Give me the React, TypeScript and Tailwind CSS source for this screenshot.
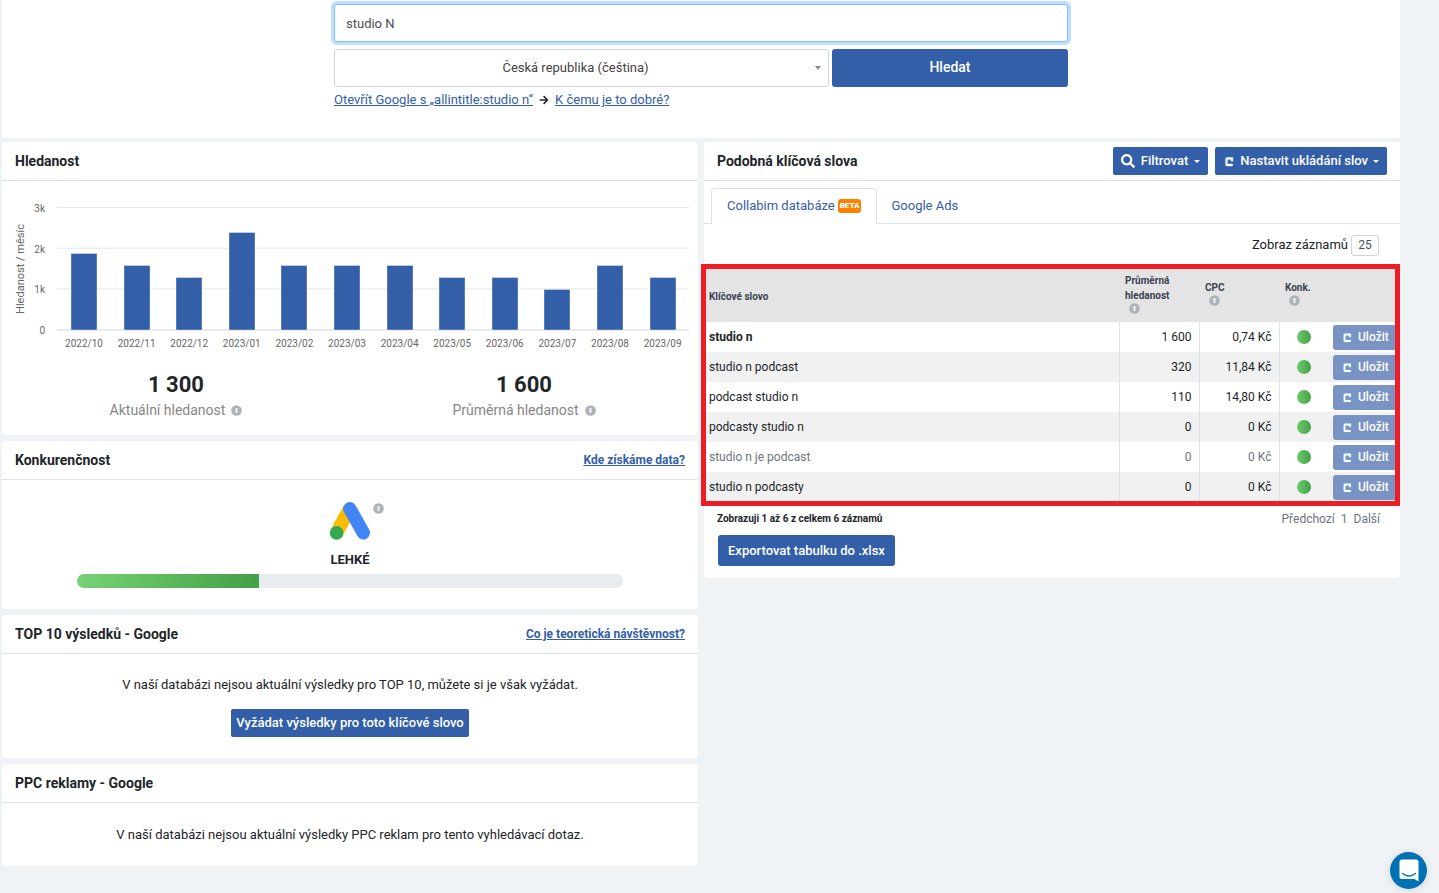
import { useState } from 'react'
import type { ReactNode } from 'react'
import { FaArrowRight, FaSearch } from 'react-icons/fa'

const volumes = [
  { month: '2022/10', value: 1900 },
  { month: '2022/11', value: 1600 },
  { month: '2022/12', value: 1300 },
  { month: '2023/01', value: 2400 },
  { month: '2023/02', value: 1600 },
  { month: '2023/03', value: 1600 },
  { month: '2023/04', value: 1600 },
  { month: '2023/05', value: 1300 },
  { month: '2023/06', value: 1300 },
  { month: '2023/07', value: 1000 },
  { month: '2023/08', value: 1600 },
  { month: '2023/09', value: 1300 },
]

const keywords = [
  { name: 'studio n', volume: '1 600', cpc: '0,74 Kč', style: 'font-bold' },
  { name: 'studio n podcast', volume: '320', cpc: '11,84 Kč', style: '' },
  { name: 'podcast studio n', volume: '110', cpc: '14,80 Kč', style: '' },
  { name: 'podcasty studio n', volume: '0', cpc: '0 Kč', style: '' },
  { name: 'studio n je podcast', volume: '0', cpc: '0 Kč', muted: true, style: '' },
  { name: 'studio n podcasty', volume: '0', cpc: '0 Kč', style: '' },
]

function InfoIcon() {
  return (
    <svg className="inline-block size-[11px] shrink-0" viewBox="0 0 11 11" aria-hidden="true">
      <circle cx="5.5" cy="5.5" r="5.3" fill="#adb3b8" />
      <rect x="4.5" y="3" width="2" height="5" rx="0.4" fill="#f1f3f4" />
    </svg>
  )
}

function CollabimIcon() {
  return (
    <svg className="inline-block h-[14px] w-[12px] shrink-0" viewBox="0 0 12 14" fill="none" aria-hidden="true">
      <path
        d="M9 8V4.5H3.5V11H9"
        stroke="#6cb4d8"
        strokeOpacity="0.6"
        strokeWidth="3.6"
        strokeLinejoin="round"
      />
      <path d="M9 7V4.5H4.2Q3.5 4.5 3.5 5.2V10.3Q3.5 11 4.2 11H9.8" stroke="#fff" strokeWidth="1.8" />
    </svg>
  )
}

function Caret() {
  return (
    <svg className="h-[3px] w-[6px]" viewBox="0 0 6 3" aria-hidden="true">
      <path d="M0 0H6L3 3Z" fill="currentColor" />
    </svg>
  )
}

function Card({ title, action, children }: { title: string; action?: ReactNode; children: ReactNode }) {
  return (
    <section className="rounded bg-white">
      <header className="flex h-[39px] items-center justify-between border-b border-[#dfe2e5] px-[13px]">
        <h2 className="text-sm font-bold">{title}</h2>
        {action}
      </header>
      {children}
    </section>
  )
}

function VolumeChart() {
  const base = 149
  const scale = 122 / 3000
  return (
    <svg className="block w-full" viewBox="0 0 696 179" role="img" aria-label="Hledanost / měsíc">
      {[3, 2, 1].map((k) => (
        <line key={k} x1="55" x2="687" y1={base - k * 1000 * scale - 0.5} y2={base - k * 1000 * scale - 0.5} stroke="#e6e6e6" />
      ))}
      <line x1="55" x2="687" y1="149" y2="149" stroke="#ccd6eb" />
      {['0', '1k', '2k', '3k'].map((label, i) => (
        <text key={label} x="43" y={153 - i * 40.7} textAnchor="end" fontSize="10" fill="#666">
          {label}
        </text>
      ))}
      <text transform="translate(22 88) rotate(-90)" textAnchor="middle" fontSize="11" fill="#666">
        Hledanost / měsíc
      </text>
      {volumes.map(({ month, value }, i) => {
        const center = 82 + i * 52.6
        const top = Math.round(base - value * scale) + 0.5
        return (
          <g key={month}>
            <rect
              x={Math.round(center - 13)}
              y={top}
              width="26"
              height={base - top}
              fill="#335ea8"
              stroke="#fff"
              strokeOpacity="0.6"
              strokeWidth="0.6"
            />
            <text x={center} y="166" textAnchor="middle" fontSize="10" fill="#666">
              {month}
            </text>
          </g>
        )
      })}
    </svg>
  )
}

function Stat({ value, label }: { value: string; label: string }) {
  return (
    <div className="flex-1 text-center">
      <p className="text-[22px] leading-7 font-bold">{value}</p>
      <p className="flex items-center justify-center gap-[6px] text-sm leading-[22px] text-[#868686]">
        {label}
        <InfoIcon />
      </p>
    </div>
  )
}

function AdsLogo() {
  return (
    <svg className="h-[38px] w-[42px]" viewBox="0 0 42 38" aria-hidden="true">
      <path d="M20.5 6.8L7.5 31" stroke="#fbbc04" strokeWidth="13.4" />
      <path d="M20.8 6.8L34.3 30.8" stroke="#4285f4" strokeWidth="13.4" strokeLinecap="round" />
      <circle cx="7.6" cy="30.9" r="6.8" fill="#34a853" />
    </svg>
  )
}

function KeywordTable() {
  return (
    <div className="relative">
      <table className="w-full table-fixed text-xs">
        <colgroup>
          <col />
          <col className="w-[80px]" />
          <col className="w-[80px]" />
          <col className="w-[50px]" />
          <col className="w-[71px]" />
        </colgroup>
        <thead>
          <tr className="h-[56px] bg-[#e4e4e4] text-left text-[10px] leading-[15px] text-[#3b3f51]">
            <th className="pt-1 pl-[5px]">Klíčové slovo</th>
            <th className="pb-1 pl-[6px]">
              Průměrná hledanost
              <span className="block h-[9px] pl-1 leading-[9px]"><InfoIcon /></span>
            </th>
            <th className="pb-1 pl-[6px]">
              CPC
              <span className="block h-[9px] pl-1 leading-[9px]"><InfoIcon /></span>
            </th>
            <th className="pb-1 pl-[6px]">
              Konk.
              <span className="block h-[9px] pl-1 leading-[9px]"><InfoIcon /></span>
            </th>
            <th aria-label="Uložit" />
          </tr>
        </thead>
        <tbody>
          {keywords.map((row) => (
            <tr key={row.name} className={`h-[30px] even:bg-[#f1f1f1] ${row.muted ? 'text-[#6c757d]' : ''}`}>
              <td className={`pl-[5px] ${row.style}`}>{row.name}</td>
              <td className="border-l border-[#dee2e6] pr-[7px] text-right">{row.volume}</td>
              <td className="border-l border-[#dee2e6] pr-[7px] text-right">{row.cpc}</td>
              <td className="border-l border-[#dee2e6]">
                <span className="mx-auto block size-[14px] rounded-full bg-linear-to-r from-[#6dcb6d] to-[#43a047]" />
              </td>
              <td className="pl-1">
                <button className="flex h-[25px] w-[64px] items-center gap-[5px] rounded-[3px] bg-[#7993c5] pl-2 font-medium text-white">
                  <CollabimIcon />
                  Uložit
                </button>
              </td>
            </tr>
          ))}
        </tbody>
      </table>
      <div className="pointer-events-none absolute -top-[2px] right-0 -bottom-1 -left-[3px] border-5 border-[#ee1c25]" />
    </div>
  )
}

export default function App() {
  const [query, setQuery] = useState('studio N')

  return (
    <div className="min-h-screen bg-[#eff3f6] pr-[39px] pl-[2px] font-[Roboto,sans-serif] text-[13px] text-[#212529]">
      <section className="bg-white pt-1 pb-8">
        <form className="mx-auto flex max-w-[734px] flex-col gap-[7px]" onSubmit={(e) => e.preventDefault()}>
          <input
            type="text"
            aria-label="Klíčové slovo"
            value={query}
            onChange={(e) => setQuery(e.target.value)}
            className="h-[38px] rounded-[3px] border border-[#80bdff] px-[11px] text-[#495057] ring-3 ring-[#bfdeff] outline-none"
          />
          <div className="flex gap-[3px]">
            <div className="relative flex-1">
              <select
                aria-label="Země a jazyk"
                className="h-[38px] w-full appearance-none rounded-[3px] border border-[#ced4da] bg-white pr-5 pl-2 text-[#444] [text-align-last:center]"
              >
                <option>Česká republika (čeština)</option>
              </select>
              <svg
                className="pointer-events-none absolute top-[17px] right-[8px] h-[4px] w-[6px]"
                viewBox="0 0 6 4"
                aria-hidden="true"
              >
                <path d="M0 0H6L3 4Z" fill="#888" />
              </svg>
            </div>
            <button type="submit" className="h-[38px] w-[236px] rounded-[3px] bg-[#335ea8] pb-[2px] text-sm font-medium text-white">
              Hledat
            </button>
          </div>
          <div className="flex h-3 items-center gap-[6px] text-[#335ea8]">
            <a href="#" className="underline">Otevřít Google s „allintitle:studio n“</a>
            <FaArrowRight className="size-[10px] text-[#212529]" />
            <a href="#" className="underline">K čemu je to dobré?</a>
          </div>
        </form>
      </section>

      <main className="mt-1 grid grid-cols-2 items-start gap-[6px]">
        <div className="flex flex-col gap-[6px]">
          <Card title="Hledanost">
            <VolumeChart />
            <div className="flex pt-[11px] pb-[14px]">
              <Stat value="1 300" label="Aktuální hledanost" />
              <Stat value="1 600" label="Průměrná hledanost" />
            </div>
          </Card>

          <Card
            title="Konkurenčnost"
            action={<a href="#" className="text-xs font-bold text-[#335ea8] underline">Kde získáme data?</a>}
          >
            <div className="flex flex-col items-center px-[75px] pt-[22px] pb-[21px]">
              <div className="relative">
                <AdsLogo />
                <span className="absolute top-px left-[44px] flex"><InfoIcon /></span>
              </div>
              <p className="mt-[10px] mb-1 leading-5 font-bold">LEHKÉ</p>
              <div className="h-[14px] w-full overflow-hidden rounded-full bg-[#e9ecef]">
                <div className="h-full w-1/3 bg-linear-to-r from-[#76d275] to-[#43a047]" />
              </div>
            </div>
          </Card>

          <Card
            title="TOP 10 výsledků - Google"
            action={<a href="#" className="text-xs font-bold text-[#335ea8] underline">Co je teoretická návštěvnost?</a>}
          >
            <div className="flex flex-col items-center gap-[14px] pt-[21px] pb-[21px]">
              <p className="leading-5">V naší databázi nejsou aktuální výsledky pro TOP 10, můžete si je však vyžádat.</p>
              <button className="h-[28px] rounded-[2px] bg-[#335ea8] px-[5px] font-medium text-white">
                Vyžádat výsledky pro toto klíčové slovo
              </button>
            </div>
          </Card>

          <Card title="PPC reklamy - Google">
            <p className="pt-[22px] pb-[21px] text-center leading-5">
              V naší databázi nejsou aktuální výsledky PPC reklam pro tento vyhledávací dotaz.
            </p>
          </Card>
        </div>

        <Card
          title="Podobná klíčová slova"
          action={
            <div className="flex gap-[7px] font-medium text-white">
              <button className="flex h-[28px] items-center gap-[6px] rounded-[2px] bg-[#335ea8] px-2">
                <FaSearch className="size-[14px]" />
                Filtrovat
                <Caret />
              </button>
              <button className="flex h-[28px] items-center gap-[5px] rounded-[2px] bg-[#335ea8] px-2">
                <CollabimIcon />
                Nastavit ukládání slov
                <Caret />
              </button>
            </div>
          }
        >
          <nav className="flex border-b border-[#dee2e6] pt-[7px] pl-[7px] text-[#335ea8]">
            <a href="#" className="-mb-px flex h-[36px] items-center gap-[3px] rounded-t border border-b-0 border-[#dee2e6] bg-white px-[15px] pb-[2px]">
              Collabim databáze
              <span className="flex h-[14px] items-center rounded-[3px] bg-[#ff7f00] px-[2px] text-[8px] font-black text-white">BETA</span>
            </a>
            <a href="#" className="flex h-[35px] items-center px-[14px]">Google Ads</a>
          </nav>
          <label className="flex h-[42px] items-center justify-end gap-[3px] pr-[21px]">
            Zobraz záznamů
            <select className="h-[21px] w-[28px] appearance-none rounded-[3px] border border-[#ced4da] text-center text-xs text-[#495057] [text-align-last:center]">
              <option>25</option>
            </select>
          </label>

          <KeywordTable />

          <div className="flex h-[33px] items-center justify-between pr-[20px] pl-[13px]">
            <p className="text-[10px] font-bold">Zobrazuji 1 až 6 z celkem 6 záznamů</p>
            <div className="flex gap-[6px] text-xs text-[#6c757d]">
              <button>Předchozí</button>
              <button>1</button>
              <button>Další</button>
            </div>
          </div>
          <div className="px-[14px] pb-3">
            <button className="h-[31px] rounded-[3px] bg-[#335ea8] px-[10px] font-medium text-white">
              Exportovat tabulku do .xlsx
            </button>
          </div>
        </Card>
      </main>

      <button
        aria-label="Chat"
        className="fixed right-3 bottom-1 flex size-[37px] items-center justify-center rounded-full bg-[#0071b2] shadow-[0_1px_8px_rgba(0,0,0,0.12)]"
      >
        <svg className="h-[23px] w-[20px]" viewBox="0 0 20 23" fill="none" aria-hidden="true">
          <path d="M3 0.5H17Q19.5 0.5 19.5 3V22.5L15.5 20H3Q0.5 20 0.5 17.5V3Q0.5 0.5 3 0.5Z" fill="#fff" />
          <path d="M3.5 14.5Q10 19.5 16.5 14.5" stroke="#0071b2" strokeWidth="1.3" strokeLinecap="round" />
        </svg>
      </button>
    </div>
  )
}
